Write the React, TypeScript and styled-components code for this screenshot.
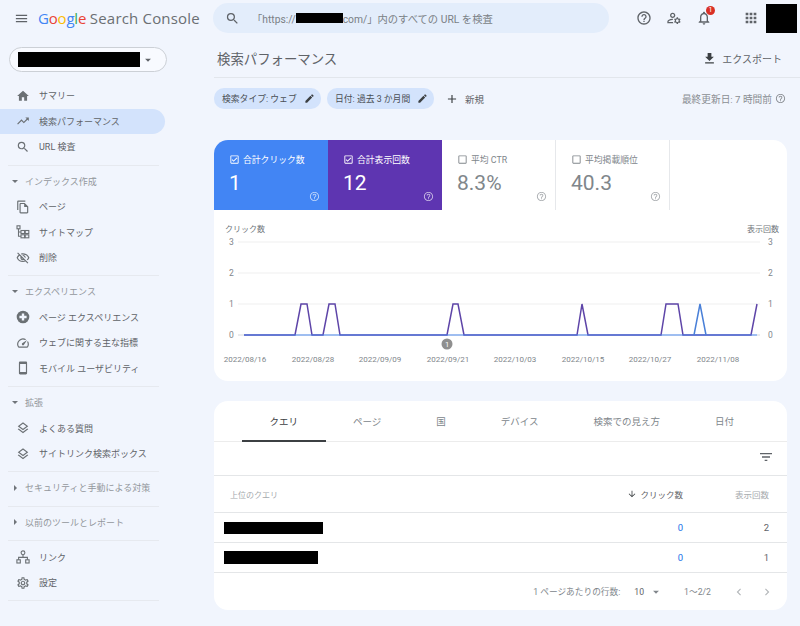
import React from "react";
import styled, { createGlobalStyle } from "styled-components";
import {
  MdMenu, MdSearch, MdHome, MdTrendingUp, MdOutlineFileCopy, MdOutlineVisibilityOff, MdOutlineSpeed,
  MdOutlineSmartphone, MdOutlineLayers, MdOutlineSettings, MdHelpOutline, MdOutlineManageAccounts,
  MdNotificationsNone, MdApps, MdFileDownload, MdEdit, MdAdd, MdFilterList, MdArrowDownward,
  MdChevronLeft, MdChevronRight, MdArrowDropDown, MdOutlineCheckBox, MdCheckBoxOutlineBlank,
} from "react-icons/md";

const GlobalStyle = createGlobalStyle`
  html, body {
    margin: 0;
    padding: 0;
    background: #f1f5fd;
  }
  body {
    font-family: Roboto, "Noto Sans CJK JP", sans-serif;
    color: #3c4043;
  }
`;

const Page = styled.div`
  display: flex;
  width: 800px;
  height: 626px;
  overflow: hidden;
  background: #f1f5fd;
`;

const Sidebar = styled.aside`
  flex: 0 0 214px;
  display: flex;
  flex-direction: column;
`;

const Brand = styled.div`
  display: flex;
  align-items: center;
  height: 36px;
  padding-left: 14px;
  color: #5f6368;
  svg { font-size: 15px; margin-right: 9px; }
`;

const Logo = styled.span`
  font-family: "Open Sans", sans-serif;
  font-size: 15px;
  letter-spacing: -0.2px;
  color: #6b6f73;
  white-space: nowrap;
`;

const Letter = styled.span<{ $c: string }>`
  color: ${p => p.$c};
`;

const ProductName = styled.span`
  letter-spacing: 0.18px;
`;

const PropertySelect = styled.div`
  display: flex;
  align-items: center;
  box-sizing: border-box;
  width: 158px;
  height: 25px;
  margin: 11px 0 11px 9px;
  padding: 0 8px 0 8px;
  background: #f8faff;
  border: 1px solid #ccd0d6;
  border-radius: 13px;
  svg { font-size: 14px; color: #5f6368; margin-left: 1px; }
`;

const Redacted = styled.div<{ $w: number; $h: number }>`
  width: ${p => p.$w}px;
  height: ${p => p.$h}px;
  background: #000;
  flex: none;
`;

const NavItem = styled.div<{ $active?: boolean }>`
  display: flex;
  align-items: center;
  box-sizing: border-box;
  width: 165px;
  height: 25.5px;
  padding-left: 16px;
  font-size: 9px;
  color: #5f6368;
  white-space: nowrap;
  border-radius: 0 13px 13px 0;
  background: ${p => (p.$active ? "#d3e3fc" : "transparent")};
  svg { flex: none; width: 14px; height: 14px; margin-right: 9px; color: #6b7074; }
`;

const NavGroup = styled.div`
  margin: 0 0 4.5px 8px;
  width: 151px;
  border-bottom: 1px solid #e6e9ef;
  padding-bottom: 5px;
  ${NavItem} { margin-left: -8px; }
  &:last-child { margin-top: -1px; }
`;

const NavHeading = styled.div`
  display: flex;
  align-items: center;
  height: 22px;
  margin-bottom: 1.75px;
  font-size: 9px;
  color: #93979c;
  white-space: nowrap;
`;

const Caret = styled.span<{ $open?: boolean }>`
  width: 0;
  height: 0;
  margin: 0 7px 0 4px;
  ${p =>
    p.$open
      ? "border-left: 3px solid transparent; border-right: 3px solid transparent; border-top: 3px solid #70757a;"
      : "border-top: 3px solid transparent; border-bottom: 3px solid transparent; border-left: 3px solid #70757a; margin-left: 6px; margin-right: 8px;"}
`;

const Main = styled.main`
  flex: 1;
  min-width: 0;
  display: flex;
  flex-direction: column;
`;

const TopBar = styled.header`
  display: flex;
  align-items: center;
  height: 36px;
  padding-right: 3px;
`;

const SearchBox = styled.div`
  display: flex;
  align-items: center;
  box-sizing: border-box;
  width: 396px;
  height: 30px;
  margin-left: -1px;
  padding-left: 12px;
  border-radius: 15px;
  background: #e3edfb;
  font-size: 10.3px;
  color: #7a7f85;
  white-space: nowrap;
  svg { font-size: 15px; color: #5f6368; margin-right: 12px; }
`;

const TopIcons = styled.div`
  flex: 1;
  display: flex;
  align-items: center;
  color: #5f6368;
  padding-left: 27px;
`;

const TopIcon = styled.div<{ $gap?: number }>`
  position: relative;
  display: flex;
  margin-right: ${p => p.$gap ?? 14}px;
  svg { font-size: 16px; }
`;

const Badge = styled.span`
  position: absolute;
  top: -4px;
  right: -3px;
  width: 9px;
  height: 9px;
  border-radius: 50%;
  background: #d93025;
  color: #fff;
  font-size: 7px;
  line-height: 9px;
  text-align: center;
`;

const Avatar = styled(Redacted)`
  margin-left: auto;
`;

const TitleRow = styled.div`
  display: flex;
  align-items: center;
  justify-content: space-between;
  height: 42px;
  padding: 3px 18px 0 3px;
  box-sizing: border-box;
  border-bottom: 1px solid #e2e6ec;
`;

const Title = styled.h1`
  margin: 0;
  font-size: 13.4px;
  font-weight: 400;
  color: #5f6368;
`;

const ExportButton = styled.div`
  display: flex;
  align-items: center;
  font-size: 10px;
  color: #5f6368;
  svg { font-size: 15px; color: #3c4043; margin-right: 5px; }
`;

const FilterRow = styled.div`
  display: flex;
  align-items: center;
  height: 21px;
  margin: 10px 0 31px;
  padding-right: 14px;
`;

const Chip = styled.div`
  display: flex;
  align-items: center;
  justify-content: space-between;
  box-sizing: border-box;
  width: 107px;
  height: 21px;
  margin-right: 6px;
  padding: 0 6px 0 8px;
  border-radius: 10px;
  background: #d3e3fc;
  font-size: 8.8px;
  color: #4a4f55;
  white-space: nowrap;
  svg { font-size: 11px; color: #3c4043; }
`;

const AddFilter = styled.div`
  display: flex;
  align-items: center;
  margin-left: 5px;
  font-size: 9.5px;
  color: #5f6368;
  svg { font-size: 14px; color: #3c4043; margin-right: 6px; }
`;

const Updated = styled.div`
  display: flex;
  align-items: center;
  margin-left: auto;
  font-size: 9.7px;
  color: #8a8e93;
  svg { font-size: 11px; margin-left: 3px; }
`;

const Card = styled.section`
  width: 573px;
  background: #fff;
  border-radius: 14px;
  overflow: hidden;
`;

const Metrics = styled.div`
  display: flex;
  height: 70px;
`;

const Metric = styled.div<{ $bg?: string }>`
  position: relative;
  box-sizing: border-box;
  width: 114px;
  padding: 13px 0 0 15px;
  background: ${p => p.$bg ?? "#fff"};
  color: ${p => (p.$bg ? "#fff" : "#80868b")};
  border-right: ${p => (p.$bg ? "none" : "1px solid #e6e8eb")};
`;

const MetricLabel = styled.div`
  display: flex;
  align-items: center;
  font-size: 8.8px;
  white-space: nowrap;
  svg { font-size: 11px; margin-right: 3px; }
`;

const MetricValue = styled.div`
  font-size: 21px;
  line-height: 25px;
  margin-top: 5px;
`;

const MetricHelp = styled.div`
  position: absolute;
  right: 8px;
  bottom: 8px;
  display: flex;
  opacity: 0.65;
  svg { font-size: 11px; }
`;

const Chart = styled.svg`
  display: block;
  width: 573px;
  height: 171px;
  font-family: Roboto, "Noto Sans CJK JP", sans-serif;
`;

const TableCard = styled(Card)`
  margin-top: 20px;
`;

const Tabs = styled.div`
  display: flex;
  height: 40px;
  padding-left: 28px;
  border-bottom: 1px solid #ececec;
`;

const Tab = styled.div<{ $active?: boolean }>`
  display: flex;
  align-items: center;
  padding: 0 27.5px;
  margin-bottom: -1px;
  font-size: 9.5px;
  color: ${p => (p.$active ? "#3c4043" : "#80868b")};
  border-bottom: 1px solid ${p => (p.$active ? "#3c4043" : "transparent")};
  box-shadow: ${p => (p.$active ? "inset 0 -1px 0 #3c4043" : "none")};
  white-space: nowrap;
`;

const Toolbar = styled.div`
  display: flex;
  align-items: center;
  justify-content: flex-end;
  box-sizing: border-box;
  height: 34px;
  padding: 0 13px 3px 0;
  border-bottom: 1px solid #e4e6e8;
  svg { font-size: 16px; color: #5f6368; }
`;

const Row = styled.div<{ $h: number }>`
  display: flex;
  align-items: center;
  height: ${p => p.$h}px;
  box-sizing: border-box;
  padding: 0 18px 0 10px;
  border-bottom: 1px solid #e4e6e8;
  font-size: 9.5px;
  color: #5f6368;
`;

const QueryCell = styled.div`
  flex: 1;
  font-size: 8px;
  color: #a6aaae;
  padding-left: 6px;
`;

const BlockCell = styled.div`
  flex: 1;
`;

const NumCell = styled.div<{ $w: number; $blue?: boolean; $muted?: boolean; $sorted?: boolean }>`
  display: flex;
  align-items: center;
  justify-content: flex-end;
  width: ${p => p.$w}px;
  font-size: ${p => (p.$muted || p.$sorted ? "8.5px" : "9.5px")};
  color: ${p => (p.$blue ? "#1a73e8" : p.$muted ? "#a6aaae" : "#5f6368")};
  svg { font-size: 10px; color: #3c4043; margin-right: 3px; }
`;

const Pager = styled.div`
  display: flex;
  align-items: center;
  justify-content: flex-end;
  height: 37px;
  padding-right: 13px;
  font-size: 8.7px;
  color: #80868b;
  white-space: nowrap;
`;

const PageSize = styled.div`
  display: flex;
  align-items: center;
  margin: 0 21px 0 14px;
  color: #5f6368;
  svg { font-size: 14px; margin-left: 5px; color: #80868b; }
`;

const PagerButtons = styled.div`
  display: flex;
  margin-left: 21px;
  color: #b4b7ba;
  svg { font-size: 14px; margin-right: 14px; }
  svg:last-child { margin-right: 0; }
`;

const SitemapIcon = () => (
  <svg viewBox="0 0 14 14" fill="none" stroke="currentColor" strokeWidth="1.1">
    <rect x="1" y="0.8" width="3" height="3" />
    <rect x="5" y="5.5" width="3.6" height="3" />
    <rect x="9.2" y="5.5" width="3.6" height="3" />
    <rect x="5" y="9.8" width="3.6" height="3" />
    <rect x="9.2" y="9.8" width="3.6" height="3" />
    <path d="M2.5 3.8V11.3H5M2.5 7H5" />
  </svg>
);

const PageExperienceIcon = () => (
  <svg viewBox="0 0 14 14">
    <circle cx="7" cy="7" r="6.3" fill="currentColor" />
    <path d="M7 3.4v7.2M3.4 7h7.2" stroke="#f1f5fd" strokeWidth="2.4" />
  </svg>
);

const LinkIcon = () => (
  <svg viewBox="0 0 14 14" fill="none" stroke="currentColor" strokeWidth="1.1">
    <circle cx="7" cy="2.8" r="1.9" />
    <rect x="0.9" y="9.8" width="3.4" height="3.2" />
    <rect x="9.7" y="9.8" width="3.4" height="3.2" />
    <path d="M7 4.7V7.4M2.6 9.8V7.4H11.4V9.8" />
  </svg>
);

const Y_TICKS: [string, number][] = [["3", 242], ["2", 273], ["1", 304], ["0", 335]];
const X_LABELS: [string, number][] = [
  ["2022/08/16", 245], ["2022/08/28", 313], ["2022/09/09", 380], ["2022/09/21", 448],
  ["2022/10/03", 515], ["2022/10/15", 583], ["2022/10/27", 650], ["2022/11/08", 718],
];

const base = 335;
const top = 304;
const purplePoints = [
  [244, base], [295, base], [301, top], [307, top], [312, base], [323, base], [329, top], [335, top], [340, base],
  [447, base], [453, top], [458, top], [464, base], [577, base], [582, top], [588, base], [661, base], [666, top],
  [678, top], [683, base], [751, base], [757, top],
];
const bluePoints = [[694, base], [700, top], [706, base]];
const toPoints = (pts: number[][]) => pts.map(p => p.join(",")).join(" ");

function PerformanceChart() {
  return (
    <Chart viewBox="214 210 573 171">
      <text x="225" y="232" fontSize="8" fill="#70757a">クリック数</text>
      <text x="747" y="232" fontSize="8" fill="#70757a">表示回数</text>
      {Y_TICKS.map(([label, y]) => (
        <g key={label}>
          <line x1="238" x2="760" y1={y} y2={y} stroke={label === "0" ? "#d5d8dc" : "#efefef"} />
          <text x="229" y={y + 3} fontSize="8.5" fill="#80868b">{label}</text>
          <text x="768" y={y + 3} fontSize="8.5" fill="#80868b">{label}</text>
        </g>
      ))}
      {X_LABELS.map(([label, x]) => (
        <text key={label} x={x} y="362" fontSize="8" fill="#80868b" textAnchor="middle">{label}</text>
      ))}
      <polyline points={toPoints(purplePoints)} fill="none" stroke="#5e45a8" strokeWidth="1.5" />
      <polyline points={toPoints([[244, base], [757, base]])} fill="none" stroke="#4285f4" strokeWidth="1.5" opacity="0.6" />
      <polyline points={toPoints(bluePoints)} fill="none" stroke="#4a80d8" strokeWidth="1.5" />
      <circle cx="447" cy="344" r="5.5" fill="#8f8f8f" />
      <text x="447" y="347" fontSize="7.5" fill="#fff" textAnchor="middle">1</text>
    </Chart>
  );
}

export default function App() {
  return (
    <>
      <GlobalStyle />
      <Page>
        <Sidebar>
          <Brand>
            <MdMenu />
            <Logo>
              <Letter $c="#4285f4">G</Letter>
              <Letter $c="#ea4335">o</Letter>
              <Letter $c="#fbbc05">o</Letter>
              <Letter $c="#4285f4">g</Letter>
              <Letter $c="#34a853">l</Letter>
              <Letter $c="#ea4335">e</Letter> <ProductName>Search Console</ProductName>
            </Logo>
          </Brand>
          <PropertySelect>
            <Redacted $w={122} $h={15} />
            <MdArrowDropDown />
          </PropertySelect>
          <NavGroup>
            <NavItem><MdHome />サマリー</NavItem>
            <NavItem $active><MdTrendingUp />検索パフォーマンス</NavItem>
            <NavItem><MdSearch />URL 検査</NavItem>
          </NavGroup>
          <NavGroup>
            <NavHeading><Caret $open />インデックス作成</NavHeading>
            <NavItem><MdOutlineFileCopy />ページ</NavItem>
            <NavItem><SitemapIcon />サイトマップ</NavItem>
            <NavItem><MdOutlineVisibilityOff />削除</NavItem>
          </NavGroup>
          <NavGroup>
            <NavHeading><Caret $open />エクスペリエンス</NavHeading>
            <NavItem><PageExperienceIcon />ページ エクスペリエンス</NavItem>
            <NavItem><MdOutlineSpeed />ウェブに関する主な指標</NavItem>
            <NavItem><MdOutlineSmartphone />モバイル ユーザビリティ</NavItem>
          </NavGroup>
          <NavGroup>
            <NavHeading><Caret $open />拡張</NavHeading>
            <NavItem><MdOutlineLayers />よくある質問</NavItem>
            <NavItem><MdOutlineLayers />サイトリンク検索ボックス</NavItem>
          </NavGroup>
          <NavGroup>
            <NavHeading><Caret />セキュリティと手動による対策</NavHeading>
          </NavGroup>
          <NavGroup>
            <NavHeading><Caret />以前のツールとレポート</NavHeading>
          </NavGroup>
          <NavGroup>
            <NavItem><LinkIcon />リンク</NavItem>
            <NavItem><MdOutlineSettings />設定</NavItem>
          </NavGroup>
        </Sidebar>
        <Main>
          <TopBar>
            <SearchBox>
              <MdSearch />
              「https://
              <Redacted $w={47} $h={10} />
              com/」内のすべての URL を検査
            </SearchBox>
            <TopIcons>
              <TopIcon><MdHelpOutline /></TopIcon>
              <TopIcon><MdOutlineManageAccounts /></TopIcon>
              <TopIcon $gap={31}><MdNotificationsNone /><Badge>1</Badge></TopIcon>
              <TopIcon $gap={0}><MdApps /></TopIcon>
              <Avatar $w={31} $h={29} />
            </TopIcons>
          </TopBar>
          <TitleRow>
            <Title>検索パフォーマンス</Title>
            <ExportButton><MdFileDownload />エクスポート</ExportButton>
          </TitleRow>
          <FilterRow>
            <Chip>検索タイプ: ウェブ<MdEdit /></Chip>
            <Chip>日付: 過去 3 か月間<MdEdit /></Chip>
            <AddFilter><MdAdd />新規</AddFilter>
            <Updated>最終更新日: 7 時間前<MdHelpOutline /></Updated>
          </FilterRow>
          <Card>
            <Metrics>
              <Metric $bg="#4285f4">
                <MetricLabel><MdOutlineCheckBox />合計クリック数</MetricLabel>
                <MetricValue>1</MetricValue>
                <MetricHelp><MdHelpOutline /></MetricHelp>
              </Metric>
              <Metric $bg="#5e35b1">
                <MetricLabel><MdOutlineCheckBox />合計表示回数</MetricLabel>
                <MetricValue>12</MetricValue>
                <MetricHelp><MdHelpOutline /></MetricHelp>
              </Metric>
              <Metric>
                <MetricLabel><MdCheckBoxOutlineBlank />平均 CTR</MetricLabel>
                <MetricValue>8.3%</MetricValue>
                <MetricHelp><MdHelpOutline /></MetricHelp>
              </Metric>
              <Metric>
                <MetricLabel><MdCheckBoxOutlineBlank />平均掲載順位</MetricLabel>
                <MetricValue>40.3</MetricValue>
                <MetricHelp><MdHelpOutline /></MetricHelp>
              </Metric>
            </Metrics>
            <PerformanceChart />
          </Card>
          <TableCard>
            <Tabs>
              <Tab $active>クエリ</Tab>
              <Tab>ページ</Tab>
              <Tab>国</Tab>
              <Tab>デバイス</Tab>
              <Tab>検索での見え方</Tab>
              <Tab>日付</Tab>
            </Tabs>
            <Toolbar><MdFilterList /></Toolbar>
            <Row $h={37}>
              <QueryCell>上位のクエリ</QueryCell>
              <NumCell $w={90} $sorted><MdArrowDownward />クリック数</NumCell>
              <NumCell $w={86} $muted>表示回数</NumCell>
            </Row>
            <Row $h={30}>
              <BlockCell><Redacted $w={99} $h={12} /></BlockCell>
              <NumCell $w={90} $blue>0</NumCell>
              <NumCell $w={86}>2</NumCell>
            </Row>
            <Row $h={30}>
              <BlockCell><Redacted $w={94} $h={13} /></BlockCell>
              <NumCell $w={90} $blue>0</NumCell>
              <NumCell $w={86}>1</NumCell>
            </Row>
            <Pager>
              1 ページあたりの行数:
              <PageSize>10<MdArrowDropDown /></PageSize>
              1〜2/2
              <PagerButtons><MdChevronLeft /><MdChevronRight /></PagerButtons>
            </Pager>
          </TableCard>
        </Main>
      </Page>
    </>
  );
}
